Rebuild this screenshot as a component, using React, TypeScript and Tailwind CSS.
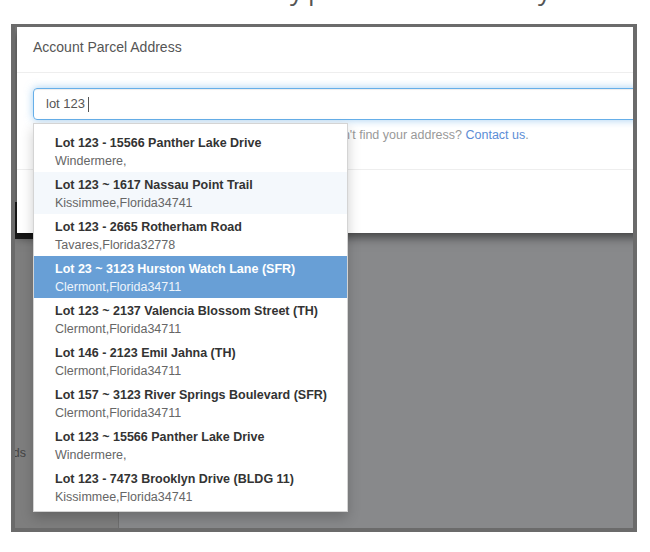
const items = [
  { title: 'Lot 123 - 15566 Panther Lake Drive', sub: 'Windermere,' },
  { title: 'Lot 123 ~ 1617 Nassau Point Trail', sub: 'Kissimmee,Florida34741', hover: true },
  { title: 'Lot 123 - 2665 Rotherham Road', sub: 'Tavares,Florida32778' },
  { title: 'Lot 23 ~ 3123 Hurston Watch Lane (SFR)', sub: 'Clermont,Florida34711', active: true },
  { title: 'Lot 123 ~ 2137 Valencia Blossom Street (TH)', sub: 'Clermont,Florida34711' },
  { title: 'Lot 146 - 2123 Emil Jahna (TH)', sub: 'Clermont,Florida34711' },
  { title: 'Lot 157 ~ 3123 River Springs Boulevard (SFR)', sub: 'Clermont,Florida34711' },
  { title: 'Lot 123 ~ 15566 Panther Lake Drive', sub: 'Windermere,' },
  { title: 'Lot 123 - 7473 Brooklyn Drive (BLDG 11)', sub: 'Kissimmee,Florida34741' },
]

const Suggestions = () => (
  <div className="absolute left-[16px] top-[96px] w-[315px] border border-[#d4d4d4] bg-white pt-[6px] pb-[3px] shadow-[0_6px_12px_rgba(0,0,0,0.2)]">
    {items.map((it, i) => (
      <div
        key={i}
        className={`h-[42px] px-[21px] pt-[4px] text-[12.5px] leading-[18px] ${
          it.active ? 'bg-[#689fd6]' : it.hover ? 'bg-[#f4f8fc]' : ''
        }`}
      >
        <div className={`font-bold whitespace-nowrap ${it.active ? 'text-white' : 'text-[#333]'}`}>{it.title}</div>
        <div className={it.active ? 'text-[#eef4fb]' : 'text-[#666]'}>{it.sub}</div>
      </div>
    ))}
  </div>
)

export default function App() {
  return (
    <div className="w-[650px] h-[552px] overflow-hidden bg-white font-['Liberation_Sans',Arial,sans-serif]">
      {/* heading above the screenshot, only descenders show */}
      <div className="h-[24px] overflow-hidden">
        <div className="-mt-[25px] flex font-['Open_Sans',sans-serif] text-[26px] leading-[30px] text-[#555]">
          <span className="ml-[290px]">y</span>
          <span className="ml-[5px]">p</span>
          <span className="ml-[214px]">y</span>
        </div>
      </div>

      <div className="relative ml-[11px] h-[508px] w-[626px] overflow-hidden border-x-4 border-t-[3px] border-b-4 border-[#6b6b6b]">
        {/* page behind the overlay */}
        <div className="flex h-full">
          <div className="w-[104px] border-r border-[#6f6f6f] bg-[#7e7e7e] pt-[175px]">
            <div className="h-[37px] w-[30px] bg-[#1e1e1e]" />
            <div className="mt-[205px] -ml-[23px] text-[12.5px] leading-[18px] text-[#444]">Lands</div>
          </div>
          <div className="flex-1 bg-[#88898b]" />
        </div>

        {/* modal */}
        <div className="absolute left-[2px] top-0 w-[700px] bg-white shadow-[0_4px_10px_rgba(0,0,0,0.55)]">
          <div className="h-[46px] border-b border-[#eeeeee] px-4 pt-[10px] text-[14px] leading-[20px] text-[#555]">
            Account Parcel Address
          </div>
          <div className="px-4 pt-[15px] pb-[25px]">
            <div className="flex h-[32px] items-center rounded-[4px] border border-[#66afe9] px-3 text-[13px] text-[#555] shadow-[inset_0_1px_1px_rgba(0,0,0,0.075),0_0_8px_rgba(102,175,233,0.6)]">
              lot 123
              <span className="ml-[3px] h-[15px] w-px bg-[#555]" />
            </div>
            <p className="mt-[6px] whitespace-nowrap text-[12.5px] leading-[18px] text-[#999]">
              Please type in your lot number or the street address. Can't find your address?{' '}
              <a className="text-[#5b8dd6]">Contact us</a>.
            </p>
          </div>
          <div className="h-[64px] border-t border-[#eeeeee]" />
          <Suggestions />
        </div>
      </div>
    </div>
  )
}
